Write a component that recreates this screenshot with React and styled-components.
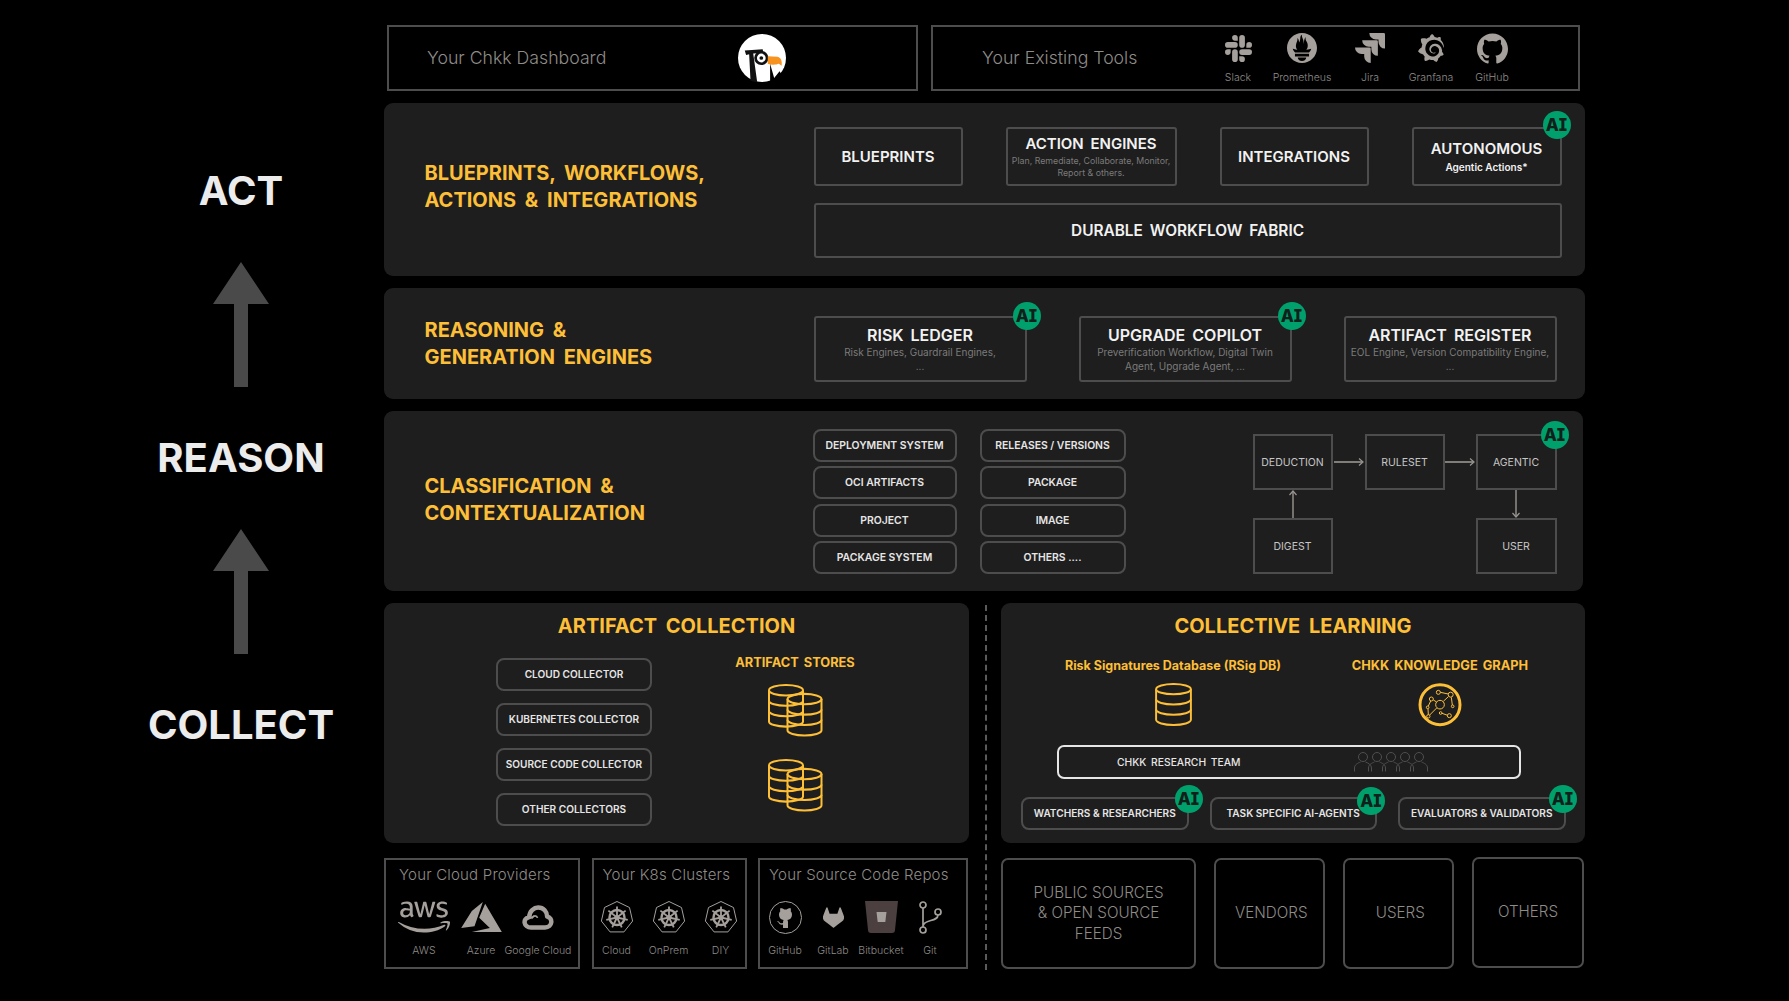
import React from 'react'
import styled, { createGlobalStyle } from 'styled-components'
import { SiSlack, SiPrometheus, SiJira, SiGrafana, SiGithub, SiGitlab } from 'react-icons/si'
import { FaAws } from 'react-icons/fa'

const GOLD = '#fdbf37'
const LINE = '#4d4d4d'
const MUTED = '#8f8c88'
const ICON = '#a5a09b'

const Global = createGlobalStyle`
  html, body { margin: 0; background: #000; }
  body { font-family: Inter, "Liberation Sans", sans-serif; }
  * { box-sizing: border-box; }
`

const Page = styled.div`
  width: 1789px;
  height: 1001px;
  background: #000;
  display: flex;
  align-items: flex-start;
  padding-top: 25px;
  overflow: hidden;
`

const Rail = styled.div`
  width: 384px;
  padding: 142.5px 0 0 98px;
  display: flex;
  flex-direction: column;
  align-items: center;
  gap: 48px;
`

const Stage = styled.div`
  font-size: 40px;
  line-height: 46px;
  font-weight: 700;
  color: #ececec;
`

const Main = styled.div`
  width: 1201px;
  display: flex;
  flex-direction: column;
  gap: 12px;
`

const TopRow = styled.div`
  display: flex;
  gap: 13px;
  padding-left: 3px;
`

const TopBox = styled.div`
  width: ${p => p.$w}px;
  height: 66px;
  border: 2px solid ${LINE};
  padding-left: ${p => p.$pad}px;
  display: flex;
  align-items: center;
`

const TopLabel = styled.div`
  flex: 0 0 ${p => p.$w}px;
  padding-bottom: 2px;
  font-size: 17.7px;
  font-weight: 300;
  color: ${MUTED};
`

const ToolItems = styled.div`
  display: flex;
  align-self: flex-start;
  padding-top: 6px;
`

const ToolItem = styled.div`
  width: ${p => p.$w}px;
  display: flex;
  flex-direction: column;
  align-items: center;
`

const ToolSlot = styled.div`
  height: 30px;
  display: flex;
  align-items: center;
  justify-content: center;
  color: ${ICON};
`

const SmallLabel = styled.div`
  margin-top: ${p => p.$mt || 8}px;
  font-size: 10.5px;
  line-height: 13px;
  font-weight: 300;
  color: ${MUTED};
  white-space: nowrap;
`

const Panel = styled.section`
  flex: none;
  width: ${p => p.$w || 1201}px;
  height: ${p => p.$h}px;
  background: #1e1e1e;
  border-radius: 9px;
  display: flex;
`

const PanelTitle = styled.h2`
  flex: 0 0 429.5px;
  margin: 0;
  padding: 0 0 ${p => p.$shift || 0}px 40.5px;
  align-self: center;
  font-size: 20px;
  line-height: 27px;
  font-weight: 700;
  word-spacing: 4px;
  color: ${GOLD};
`

const ActBody = styled.div`
  padding-top: 24px;
  display: flex;
  flex-direction: column;
  gap: 17px;
`

const TileRow = styled.div`
  display: flex;
  gap: ${p => p.$gap}px;
  padding-top: ${p => p.$top || 0}px;
`

const Tile = styled.div`
  position: relative;
  flex: none;
  width: ${p => p.$w}px;
  height: ${p => p.$h}px;
  border: 2px solid ${LINE};
  border-radius: 3px;
  display: flex;
  flex-direction: column;
  align-items: center;
  justify-content: center;
  text-align: center;
`

const TileName = styled.div`
  font-size: ${p => p.$size || 15}px;
  line-height: 20px;
  font-weight: 600;
  word-spacing: 3px;
  color: #f2f2f2;
  white-space: nowrap;
`

const TileNote = styled.div`
  font-size: ${p => p.$size || 10}px;
  line-height: ${p => p.$lh || 13.5}px;
  font-weight: ${p => (p.$bright ? 600 : 400)};
  color: ${p => (p.$bright ? '#f2f2f2' : '#7b7b7b')};
  margin-top: 1px;
`

const Badge = styled.div`
  position: absolute;
  top: ${p => p.$top}px;
  right: ${p => p.$right}px;
  width: 28px;
  height: 28px;
  border-radius: 50%;
  background: #00a06c;
  color: #10201a;
  font-size: 17px;
  font-weight: 800;
  font-feature-settings: 'ss02';
  display: flex;
  align-items: center;
  justify-content: center;
`

const PillGrid = styled.div`
  margin-left: -1px;
  padding-top: 18px;
  display: grid;
  grid-template-columns: 144px 146px;
  grid-auto-rows: 33px;
  column-gap: 23px;
  row-gap: 4.4px;
`

const Pill = styled.div`
  height: 33px;
  width: ${p => p.$w || 'auto'};
  border: 2px solid ${LINE};
  border-radius: 8px;
  display: flex;
  align-items: center;
  justify-content: center;
  position: relative;
  font-size: ${p => p.$size || 10.4}px;
  font-weight: 600;
  color: #e6e6e6;
  white-space: nowrap;
`

const Flow = styled.div`
  margin: 23px 0 0 127px;
  display: grid;
  grid-template-columns: 80px 32px 80px 31px 81px;
  grid-template-rows: 56px 28px 56px;
  align-self: flex-start;
`

const FlowBox = styled.div`
  position: relative;
  grid-column: ${p => p.$col};
  grid-row: ${p => p.$row};
  border: 2px solid ${LINE};
  display: flex;
  align-items: center;
  justify-content: center;
  font-size: 10.5px;
  color: #c6c6c6;
`

const FlowArrow = styled.div`
  grid-column: ${p => p.$col};
  grid-row: ${p => p.$row};
  display: flex;
  align-items: center;
  justify-content: center;
`

const Lower = styled.div`
  display: grid;
  grid-template-columns: 585px 32px 584px;
  grid-template-rows: 240px 111px;
  row-gap: 15px;
`

const Divider = styled.div`
  grid-column: 2;
  grid-row: 1 / 3;
  justify-self: center;
  margin: 2px 0 0 2px;
  height: 365px;
  border-left: 2px dashed #5a5a5a;
`

const LowerPanel = styled.section`
  background: #1e1e1e;
  border-radius: 9px;
  padding-top: 9px;
  display: flex;
  flex-direction: column;
`

const LowerTitle = styled.h2`
  margin: 0;
  text-align: center;
  font-size: 20px;
  line-height: 28px;
  font-weight: 700;
  word-spacing: 4px;
  color: ${GOLD};
`

const CollectBody = styled.div`
  margin-top: 17.5px;
  padding-left: 112px;
  display: flex;
  gap: 63px;
`

const CollectorList = styled.div`
  width: 156px;
  display: flex;
  flex-direction: column;
  gap: 12px;
`

const StoreColumn = styled.div`
  width: 160px;
  margin-top: -3px;
  display: flex;
  flex-direction: column;
  align-items: center;
  gap: 22px;
`

const GoldLabel = styled.div`
  font-size: ${p => p.$size || 12.8}px;
  line-height: 16px;
  font-weight: 700;
  word-spacing: ${p => (p.$size ? 0 : 2)}px;
  color: ${GOLD};
  white-space: nowrap;
  margin-bottom: ${p => p.$mb || 0}px;
`

const LearnRow = styled.div`
  margin-top: 17.5px;
  padding-left: 62px;
  display: flex;
  gap: 47px;
`

const LearnColumn = styled.div`
  width: 220px;
  display: flex;
  flex-direction: column;
  align-items: center;
  gap: 9px;
`

const TeamBar = styled.div`
  flex: none;
  margin: 18px 0 0 56px;
  width: 464px;
  height: 34px;
  border: 2px solid #e6e6e6;
  border-radius: 7px;
  padding-left: 58px;
  display: flex;
  align-items: center;
  gap: 114px;
  font-size: 10.3px;
  font-weight: 500;
  word-spacing: 2px;
  color: #e6e6e6;
`

const AgentRow = styled.div`
  margin: 18px 0 0 20px;
  display: flex;
  gap: 21px;
`

const SourceRow = styled.div`
  display: flex;
  gap: 11.5px;
`

const SourceCard = styled.div`
  flex: none;
  width: ${p => p.$w}px;
  height: 111px;
  border: 2px solid ${LINE};
  padding-top: 5px;
`

const SourceHead = styled.div`
  padding-left: ${p => p.$pad}px;
  font-size: 15px;
  line-height: 20px;
  font-weight: 300;
  letter-spacing: 0.2px;
  color: ${MUTED};
  white-space: nowrap;
`

const SourceItems = styled.div`
  margin-top: 14px;
  padding-left: ${p => p.$pad}px;
  display: flex;
  gap: ${p => p.$gap || 8}px;
`

const SourceItem = styled.div`
  width: ${p => p.$w}px;
  display: flex;
  flex-direction: column;
  align-items: center;
`

const IconSlot = styled.div`
  height: 36px;
  display: flex;
  align-items: center;
  justify-content: center;
  color: ${ICON};
`

const FeedRow = styled.div`
  display: flex;
  gap: 18px;
`

const FeedBox = styled.div`
  flex: none;
  width: ${p => p.$w}px;
  height: 111px;
  margin-top: ${p => p.$up || 0}px;
  border: 2px solid ${LINE};
  border-radius: 7px;
  display: flex;
  align-items: center;
  justify-content: center;
  text-align: center;
  padding: 0 ${p => p.$pad || 0}px 0 ${p => p.$left || p.$pad || 0}px;
  font-size: 15.2px;
  line-height: 20.5px;
  font-weight: 300;
  color: ${MUTED};
`

const ArrowUp = () => (
  <svg width="56" height="125" viewBox="0 0 56 125">
    <path d="M28 0 L56 42 H35 V125 H21 V42 H0 Z" fill="#4a4a4a" />
  </svg>
)

const Logo = () => (
  <svg width="48" height="48" viewBox="55 42 142 142">
    <circle cx="126" cy="113" r="71" fill="#fff" />
    <path d="M75 91 L128 87 L130 98 L100 100 L112 186 L92 180 L88 102 L79 104 Z" fill="#111" />
    <circle cx="124" cy="113" r="21" fill="#111" />
    <circle cx="124" cy="113" r="13" fill="#fff" />
    <circle cx="124" cy="113" r="5.5" fill="#111" />
    <path d="M143 108 L172 109 C183 112 186 122 184 136 L176 130 C168 133 154 134 143 130 Z" fill="#f7931e" />
    <path d="M150 130 L162 172 L178 152 L200 190 L150 190 Z" fill="#000" />
  </svg>
)

const AzureLogo = () => (
  <svg width="41" height="30" viewBox="30 25 122 90" fill="currentColor">
    <path d="M95 25 L62 52 L30 103 L70 98 Z M102 30 L84 72 L116 103 L62 115 H152 Z" />
  </svg>
)

const GoogleCloudLogo = () => (
  <svg width="32" height="25" viewBox="205 33 93 72" fill="none" stroke="currentColor">
    <path strokeWidth="13" strokeLinejoin="round" d="M231 98 C210 98 205 72 226 68 C226 50 240 40 252 40 C268 40 278 52 278 66 C296 70 294 98 272 98 Z" />
    <path strokeWidth="5" d="M234 70 C238 62 248 62 250 70" />
    <path strokeWidth="4" d="M240 64 L234 71 L228 64" />
  </svg>
)

const heptagon = Array.from({ length: 7 }, (_, i) => {
  const a = (-90 + (i * 360) / 7) * (Math.PI / 180)
  return `${17 + 16 * Math.cos(a)},${17.5 + 16 * Math.sin(a)}`
}).join(' ')

const spokes = Array.from({ length: 7 }, (_, i) => (-90 + (i * 360) / 7) * (Math.PI / 180))

const WheelIcon = () => (
  <svg width="34" height="34" viewBox="0 0 34 34" fill="none" stroke={ICON}>
    <polygon points={heptagon} strokeWidth="1" strokeLinejoin="round" />
    <circle cx="17" cy="17.5" r="7.5" strokeWidth="2.4" />
    {spokes.map(a => (
      <line
        key={a}
        x1="17"
        y1="17.5"
        x2={17 + 11 * Math.cos(a)}
        y2={17.5 + 11 * Math.sin(a)}
        strokeWidth="1.8"
      />
    ))}
    <circle cx="17" cy="17.5" r="2.6" fill={ICON} stroke="none" />
  </svg>
)

const RepoGithub = () => (
  <svg width="33" height="33" viewBox="0 0 33 33">
    <circle cx="16.5" cy="16.5" r="16" fill="none" stroke={ICON} />
    <path
      transform="translate(4.5 4)"
      fill={ICON}
      d="M7 3 C8.5 3 10 4 10.8 4.6 C11.6 4.4 12.4 4.4 13.2 4.6 C14 4 15.5 3 17 3 C17.5 4.5 17.5 5.5 17.2 6.2 C18.2 7.2 18.5 8.6 18.5 9.8 C18.5 13 16.5 14.6 13.8 15 C14.4 15.6 14.5 16.5 14.5 17.5 V23 H9.5 V19.5 C7.5 20 6 19.5 5 17.5 C4.5 16.7 3.8 16.3 3.2 16 C4.5 15.8 5.5 16.5 6.2 17.5 C7 18.5 8 18.5 9.5 18 C9.5 17 9.7 15.6 10.2 15 C7.5 14.6 5.5 13 5.5 9.8 C5.5 8.6 5.8 7.2 6.8 6.2 C6.5 5.5 6.5 4.5 7 3Z"
    />
  </svg>
)

const BitbucketLogo = () => (
  <svg width="33" height="32" viewBox="0 0 33 32">
    <path d="M0 0 H33 L30 29 Q30 32 27 32 H6 Q3 32 3 29 Z" fill="#4b3f3f" />
    <path d="M11.5 11 H21.5 L20.3 21 H12.7 Z" fill="#a5a09b" />
  </svg>
)

const GitLogo = () => (
  <svg width="23" height="33" viewBox="0 0 23 33" fill="none" stroke={ICON} strokeWidth="1.7">
    <circle cx="4" cy="4" r="3" />
    <circle cx="4" cy="29" r="3" />
    <circle cx="19" cy="11" r="3" />
    <path d="M4 7 V26 M19 14 C19 21 5 18 4 25" />
  </svg>
)

const Cylinder = ({ x = 0, y = 0 }) => (
  <g transform={`translate(${x} ${y})`}>
    <ellipse cx="18" cy="6" rx="17" ry="5" />
    <path d="M1 6 V36 A17 5 0 0 0 35 36 V6" />
    <path d="M1 16 A17 5 0 0 0 35 16" />
    <path d="M1 26 A17 5 0 0 0 35 26" />
  </g>
)

const StoreIcon = () => (
  <svg width="55" height="53" viewBox="0 0 55 51" preserveAspectRatio="none" fill="none" stroke={GOLD} strokeWidth="2">
    <Cylinder />
    <Cylinder x={18.5} y={8.5} />
  </svg>
)

const DbIcon = () => (
  <svg width="37" height="44" viewBox="0 0 36 43" fill="none" stroke={GOLD} strokeWidth="1.9">
    <Cylinder />
  </svg>
)

const GraphIcon = () => (
  <svg width="44" height="44" viewBox="24 15 132 132" fill="none" stroke={GOLD}>
    <circle cx="90" cy="80" r="60" strokeWidth="9" />
    <g strokeWidth="3">
      <circle cx="90" cy="80" r="13" />
      <circle cx="85" cy="43" r="6" />
      <circle cx="122" cy="50" r="7.5" />
      <circle cx="128" cy="85" r="4" />
      <circle cx="64" cy="63" r="6" />
      <circle cx="53" cy="88" r="4" />
      <circle cx="55" cy="115" r="5" />
      <circle cx="92" cy="105" r="4" />
      <circle cx="118" cy="113" r="6" />
      <path d="M91 43 L115 48 M115 56 L100 70 M124 58 L127 81 M70 66 L80 72 M62 69 L55 84 M54 92 L55 110 M80 90 L59 111 M96 106 L113 112" />
    </g>
  </svg>
)

const People = () => (
  <svg width="74" height="20" viewBox="0 0 74 20" fill="none" stroke="#4f4f4f" strokeWidth="1">
    {[0, 14, 28, 42, 56].map(x => (
      <g key={x} transform={`translate(${x} 0)`}>
        <circle cx="9" cy="5" r="4.5" />
        <path d="M0.5 19.5 V16 C0.5 12.5 4 11 6.5 10 M17.5 19.5 V16 C17.5 12.5 14 11 11.5 10" />
      </g>
    ))}
  </svg>
)

const ArrowRight = () => (
  <svg width="30" height="10" viewBox="0 0 30 10" fill="none" stroke="#9a9691">
    <path d="M0 5 H28" strokeWidth="1.6" />
    <path d="M25 1.5 L29 5 L25 8.5" strokeWidth="1.2" />
  </svg>
)

const ArrowVertical = ({ up }) => (
  <svg width="10" height="28" viewBox="0 0 10 28" fill="none" stroke="#9a9691" style={up ? undefined : { transform: 'rotate(180deg)' }}>
    <path d="M5 2 V28" strokeWidth="1.4" />
    <path d="M1.5 5 L5 1 L8.5 5" strokeWidth="1.2" />
  </svg>
)

const tools = [
  { name: 'Slack', w: 56, icon: <SiSlack size={27} /> },
  { name: 'Prometheus', w: 72, icon: <SiPrometheus size={30} /> },
  { name: 'Jira', w: 64, icon: <SiJira size={30} /> },
  { name: 'Granfana', w: 58, icon: <SiGrafana size={28} /> },
  { name: 'GitHub', w: 64, icon: <SiGithub size={31} /> },
]

const pills = [
  'DEPLOYMENT SYSTEM', 'RELEASES / VERSIONS',
  'OCI ARTIFACTS', 'PACKAGE',
  'PROJECT', 'IMAGE',
  'PACKAGE SYSTEM', 'OTHERS ....',
]

const collectors = ['CLOUD COLLECTOR', 'KUBERNETES COLLECTOR', 'SOURCE CODE COLLECTOR', 'OTHER COLLECTORS']

const agents = [
  { name: 'WATCHERS & RESEARCHERS', right: -16, top: -14 },
  { name: 'TASK SPECIFIC AI-AGENTS', right: -10, top: -12 },
  { name: 'EVALUATORS & VALIDATORS', right: -13, top: -14 },
]

const App = () => {
  return (
    <Page>
      <Global />
      <Rail>
        <Stage>ACT</Stage>
        <ArrowUp />
        <Stage>REASON</Stage>
        <ArrowUp />
        <Stage>COLLECT</Stage>
      </Rail>

      <Main>
        <TopRow>
          <TopBox $w={531} $pad={38}>
            <TopLabel $w={311}>Your Chkk Dashboard</TopLabel>
            <Logo />
          </TopBox>
          <TopBox $w={649} $pad={49}>
            <TopLabel $w={228}>Your Existing Tools</TopLabel>
            <ToolItems>
              {tools.map(t => (
                <ToolItem key={t.name} $w={t.w}>
                  <ToolSlot>{t.icon}</ToolSlot>
                  <SmallLabel>{t.name}</SmallLabel>
                </ToolItem>
              ))}
            </ToolItems>
          </TopBox>
        </TopRow>

        <Panel $h={173}>
          <PanelTitle $shift={6}>
            BLUEPRINTS, WORKFLOWS,<br />ACTIONS &amp; INTEGRATIONS
          </PanelTitle>
          <ActBody>
            <TileRow $gap={43}>
              <Tile $w={149} $h={59}><TileName>BLUEPRINTS</TileName></Tile>
              <Tile $w={171} $h={59}>
                <TileName>ACTION ENGINES</TileName>
                <TileNote $size={8.8} $lh={12}>Plan, Remediate, Collaborate, Monitor, Report &amp; others.</TileNote>
              </Tile>
              <Tile $w={149} $h={59}><TileName>INTEGRATIONS</TileName></Tile>
              <Tile $w={150} $h={59}>
                <TileName>AUTONOMOUS</TileName>
                <TileNote $bright $size={10} $lh={14}>Agentic Actions*</TileNote>
                <Badge $top={-18} $right={-11}>AI</Badge>
              </Tile>
            </TileRow>
            <Tile $w={748} $h={55}><TileName $size={15.4}>DURABLE WORKFLOW FABRIC</TileName></Tile>
          </ActBody>
        </Panel>

        <Panel $h={111}>
          <PanelTitle>
            REASONING &amp;<br />GENERATION ENGINES
          </PanelTitle>
          <TileRow $gap={52} $top={28}>
            <Tile $w={213} $h={66}>
              <TileName $size={16}>RISK LEDGER</TileName>
              <TileNote>Risk Engines, Guardrail Engines,<br />...</TileNote>
              <Badge $top={-16} $right={-16}>AI</Badge>
            </Tile>
            <Tile $w={213} $h={66}>
              <TileName $size={16}>UPGRADE COPILOT</TileName>
              <TileNote>Preverification Workflow, Digital Twin Agent, Upgrade Agent, ...</TileNote>
              <Badge $top={-16} $right={-16}>AI</Badge>
            </Tile>
            <Tile $w={213} $h={66}>
              <TileName $size={16}>ARTIFACT REGISTER</TileName>
              <TileNote>EOL Engine, Version Compatibility Engine,<br />...</TileNote>
            </Tile>
          </TileRow>
        </Panel>

        <Panel $h={180} $w={1199}>
          <PanelTitle $shift={3}>
            CLASSIFICATION &amp;<br />CONTEXTUALIZATION
          </PanelTitle>
          <PillGrid>
            {pills.map(p => <Pill key={p}>{p}</Pill>)}
          </PillGrid>
          <Flow>
            <FlowBox $col={1} $row={1}>DEDUCTION</FlowBox>
            <FlowArrow $col={2} $row={1}><ArrowRight /></FlowArrow>
            <FlowBox $col={3} $row={1}>RULESET</FlowBox>
            <FlowArrow $col={4} $row={1}><ArrowRight /></FlowArrow>
            <FlowBox $col={5} $row={1}>
              AGENTIC
              <Badge $top={-15} $right={-14}>AI</Badge>
            </FlowBox>
            <FlowArrow $col={1} $row={2}><ArrowVertical up /></FlowArrow>
            <FlowArrow $col={5} $row={2}><ArrowVertical /></FlowArrow>
            <FlowBox $col={1} $row={3}>DIGEST</FlowBox>
            <FlowBox $col={5} $row={3}>USER</FlowBox>
          </Flow>
        </Panel>

        <Lower>
          <LowerPanel>
            <LowerTitle>ARTIFACT COLLECTION</LowerTitle>
            <CollectBody>
              <CollectorList>
                {collectors.map(c => <Pill key={c} $size={10.1}>{c}</Pill>)}
              </CollectorList>
              <StoreColumn>
                <GoldLabel $mb={-9}>ARTIFACT STORES</GoldLabel>
                <StoreIcon />
                <StoreIcon />
              </StoreColumn>
            </CollectBody>
          </LowerPanel>

          <Divider />

          <LowerPanel>
            <LowerTitle>COLLECTIVE LEARNING</LowerTitle>
            <LearnRow>
              <LearnColumn>
                <GoldLabel $size={12.5}>Risk Signatures Database (RSig DB)</GoldLabel>
                <DbIcon />
              </LearnColumn>
              <LearnColumn>
                <GoldLabel>CHKK KNOWLEDGE GRAPH</GoldLabel>
                <GraphIcon />
              </LearnColumn>
            </LearnRow>
            <TeamBar>
              <span>CHKK RESEARCH TEAM</span>
              <People />
            </TeamBar>
            <AgentRow>
              {agents.map(a => (
                <Pill key={a.name} $w="167.5px" $size={10.1}>
                  {a.name}
                  <Badge $top={a.top} $right={a.right}>AI</Badge>
                </Pill>
              ))}
            </AgentRow>
          </LowerPanel>

          <SourceRow>
            <SourceCard $w={196}>
              <SourceHead $pad={13}>Your Cloud Providers</SourceHead>
              <SourceItems $pad={13} $gap={7}>
                <SourceItem $w={50}><IconSlot><FaAws size={52} /></IconSlot><SmallLabel $mt={9}>AWS</SmallLabel></SourceItem>
                <SourceItem $w={50}><IconSlot><AzureLogo /></IconSlot><SmallLabel $mt={9}>Azure</SmallLabel></SourceItem>
                <SourceItem $w={50}><IconSlot><GoogleCloudLogo /></IconSlot><SmallLabel $mt={9}>Google Cloud</SmallLabel></SourceItem>
              </SourceItems>
            </SourceCard>
            <SourceCard $w={155}>
              <SourceHead $pad={9}>Your K8s Clusters</SourceHead>
              <SourceItems $pad={1}>
                {['Cloud', 'OnPrem', 'DIY'].map(n => (
                  <SourceItem key={n} $w={44}><IconSlot><WheelIcon /></IconSlot><SmallLabel $mt={9}>{n}</SmallLabel></SourceItem>
                ))}
              </SourceItems>
            </SourceCard>
            <SourceCard $w={210}>
              <SourceHead $pad={9}>Your Source Code Repos</SourceHead>
              <SourceItems $pad={5}>
                <SourceItem $w={40}><IconSlot><RepoGithub /></IconSlot><SmallLabel $mt={9}>GitHub</SmallLabel></SourceItem>
                <SourceItem $w={40}><IconSlot><SiGitlab size={21} /></IconSlot><SmallLabel $mt={9}>GitLab</SmallLabel></SourceItem>
                <SourceItem $w={40}><IconSlot><BitbucketLogo /></IconSlot><SmallLabel $mt={9}>Bitbucket</SmallLabel></SourceItem>
                <SourceItem $w={42}><IconSlot><GitLogo /></IconSlot><SmallLabel $mt={9}>Git</SmallLabel></SourceItem>
              </SourceItems>
            </SourceCard>
          </SourceRow>

          <FeedRow>
            <FeedBox $w={195} $pad={24}>PUBLIC SOURCES &amp; OPEN SOURCE FEEDS</FeedBox>
            <FeedBox $w={110.5} $left={4}>VENDORS</FeedBox>
            <FeedBox $w={111.5} $left={4}>USERS</FeedBox>
            <FeedBox $w={112} $up={-1.5}>OTHERS</FeedBox>
          </FeedRow>
        </Lower>
      </Main>
    </Page>
  )
}

export default App
